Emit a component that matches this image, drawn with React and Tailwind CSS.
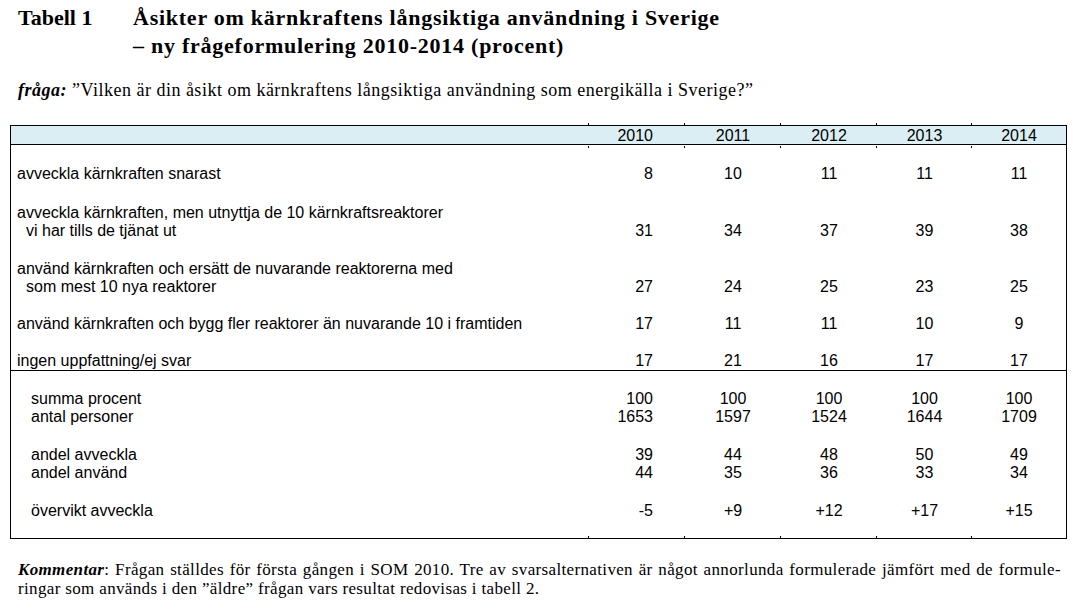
import React from "react";

const cols = "grid grid-cols-[578px_96px_96px_96px_95px_1fr]";

const upper = [
  { lines: ["avveckla kärnkraften snarast"], v: ["8", "10", "11", "11", "11"], mt: "mt-0" },
  { lines: ["avveckla kärnkraften, men utnyttja de 10 kärnkraftsreaktorer", "vi har tills de tjänat ut"], v: ["31", "34", "37", "39", "38"], mt: "mt-[21px]" },
  { lines: ["använd kärnkraften och ersätt de nuvarande reaktorerna med", "som mest 10 nya reaktorer"], v: ["27", "24", "25", "23", "25"], mt: "mt-[20px]" },
  { lines: ["använd kärnkraften och bygg fler reaktorer än nuvarande 10 i framtiden"], v: ["17", "11", "11", "10", "9"], mt: "mt-[19px]" },
  { lines: ["ingen uppfattning/ej svar"], v: ["17", "21", "16", "17", "17"], mt: "mt-[19px]" },
];

const lower = [
  { label: "summa procent", v: ["100", "100", "100", "100", "100"], mt: "mt-0" },
  { label: "antal personer", v: ["1653", "1597", "1524", "1644", "1709"], mt: "mt-0" },
  { label: "andel avveckla", v: ["39", "44", "48", "50", "49"], mt: "mt-[20px]" },
  { label: "andel använd", v: ["44", "35", "36", "33", "34"], mt: "mt-0" },
  { label: "övervikt avveckla", v: ["-5", "+9", "+12", "+17", "+15"], mt: "mt-[20px]" },
];

function Nums({ v, end }) {
  return v.map((n, i) => (
    <div
      key={i}
      className={
        (i === 0 ? "text-right pr-[32px]" : "text-center") + (end ? " self-end" : "")
      }
    >
      {n}
    </div>
  ));
}

export default function App() {
  return (
    <div className="w-[1073px] h-[611px] bg-white text-black overflow-hidden">
      {/* Title */}
      <div className="pl-[18px] pt-[4px] font-['Liberation_Serif',serif] font-bold text-[22px] leading-[28px] flex">
        <div className="w-[115px] shrink-0">Tabell 1</div>
        <div className="tracking-[0.75px]">
          <div>Åsikter om kärnkraftens långsiktiga användning i Sverige</div>
          <div>– ny frågeformulering 2010-2014 (procent)</div>
        </div>
      </div>

      {/* Question */}
      <p className="mt-[20px] pl-[18px] font-['Liberation_Serif',serif] text-[18px] leading-[20px] tracking-[0.5px]">
        <b>
          <i>fråga:</i>
        </b>{" "}
        ”Vilken är din åsikt om kärnkraftens långsiktiga användning som energikälla i Sverige?”
      </p>

      {/* Table */}
      <div className="mt-[25px] ml-[10px] w-[1057px] border border-black font-['Liberation_Sans',Arial,sans-serif] text-[16px] leading-[18px]">
        <div className={cols + " h-[19px] pt-[1px] bg-[#dbeef3] border-b border-black"}>
          <div></div>
          {["2010", "2011", "2012", "2013", "2014"].map((y, i) => (
            <div key={y} className={(i === 0 ? "text-right pr-[32px]" : "text-center") + " relative"}>
              {y}
              <span className="absolute left-[-1px] top-[-4px] w-px h-[2px] bg-black"></span>
              <span className="absolute left-[-1px] bottom-[-3px] w-px h-[2px] bg-black"></span>
            </div>
          ))}
        </div>

        <div className="pt-[20px] pb-0 border-b border-black">
          {upper.map((r, idx) => (
            <div key={idx} className={cols + " " + r.mt}>
              <div className="pl-[6px]">
                {r.lines.map((l, j) => (
                  <div key={j} className={j > 0 ? "pl-[9px]" : ""}>
                    {l}
                  </div>
                ))}
              </div>
              <Nums v={r.v} end />
            </div>
          ))}
        </div>

        <div className="pt-[19px] pb-[18px]">
          {lower.map((r, idx) => (
            <div key={idx} className={cols + " " + r.mt}>
              <div className="pl-[20px]">{r.label}</div>
              <Nums v={r.v} />
            </div>
          ))}
          <div className={cols + " h-0"}>
            <div></div>
            {[0, 1, 2, 3, 4].map((i) => (
              <div key={i} className="relative">
                <span className="absolute left-[-1px] top-[16px] w-px h-[2px] bg-black"></span>
              </div>
            ))}
          </div>
        </div>
      </div>

      {/* Comment */}
      <div className="mt-[21px] pl-[18px] w-[1061px] font-['Liberation_Serif',serif] text-[17px] leading-[19px] tracking-[0.35px]">
        <div className="text-justify [text-align-last:justify]">
          <b>
            <i>Kommentar</i>
          </b>
          : Frågan ställdes för första gången i SOM 2010. Tre av svarsalternativen är något annorlunda formulerade jämfört med de formule-
        </div>
        <div>ringar som används i den ”äldre” frågan vars resultat redovisas i tabell 2.</div>
      </div>
    </div>
  );
}
